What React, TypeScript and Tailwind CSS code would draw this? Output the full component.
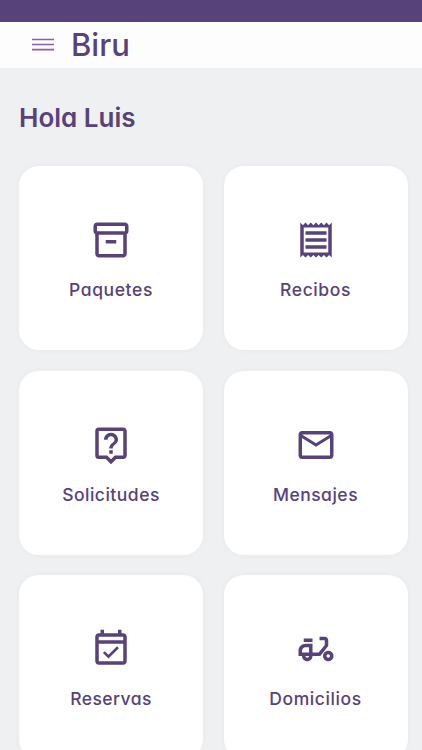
import type { IconType } from "react-icons";
import {
  MdMailOutline,
  MdOutlineDeliveryDining,
  MdOutlineEventAvailable,
  MdOutlineInventory2,
  MdOutlineLiveHelp,
  MdOutlineReceipt,
} from "react-icons/md";

type Tile = { label: string; icon: IconType; tracking: string };

const tiles: Tile[] = [
  { label: "Paquetes", icon: MdOutlineInventory2, tracking: "tracking-[0.6px]" },
  { label: "Recibos", icon: MdOutlineReceipt, tracking: "tracking-[0.6px]" },
  { label: "Solicitudes", icon: MdOutlineLiveHelp, tracking: "tracking-[0.5px]" },
  { label: "Mensajes", icon: MdMailOutline, tracking: "tracking-[0.5px]" },
  { label: "Reservas", icon: MdOutlineEventAvailable, tracking: "tracking-[0.45px]" },
  { label: "Domicilios", icon: MdOutlineDeliveryDining, tracking: "tracking-[0.6px]" },
];

function TileCard({ label, icon: Icon, tracking }: Tile) {
  return (
    <button className="flex h-[184px] flex-col items-center rounded-[20px] bg-white pt-[53px] shadow-[0_0_6px_rgba(80,70,110,0.04)]">
      <Icon size={42} />
      <span className={`mt-[15px] text-[17.5px] leading-[28px] font-medium ${tracking}`}>{label}</span>
    </button>
  );
}

export default function App() {
  return (
    <div className="h-[750px] w-full overflow-hidden bg-[#eff0f2] font-[Inter,'Open_Sans',sans-serif] text-[#58427a] [font-feature-settings:'cv11']">
      <div className="h-[22px] bg-[#58427a]" />
      <header className="flex h-[46px] items-center bg-[#fdfdfd] pl-8">
        <button aria-label="Menú">
          <svg
            className="block"
            width="22"
            height="14"
            viewBox="0 0 22 14"
            stroke="#8b619f"
            strokeWidth="1.7"
          >
            <path d="M0 1.5h22M0 6.5h22M0 11.7h22" />
          </svg>
        </button>
        <span className="ml-[17px] text-[31px] leading-[46px] font-medium">Biru</span>
      </header>
      <main className="pt-8 pr-[14.5px] pl-[19px]">
        <h1 className="text-[26px] leading-[36px] font-semibold">Hola Luis</h1>
        <div className="mt-[30px] grid grid-cols-2 gap-[20.5px]">
          {tiles.map((tile) => (
            <TileCard key={tile.label} {...tile} />
          ))}
        </div>
      </main>
    </div>
  );
}
